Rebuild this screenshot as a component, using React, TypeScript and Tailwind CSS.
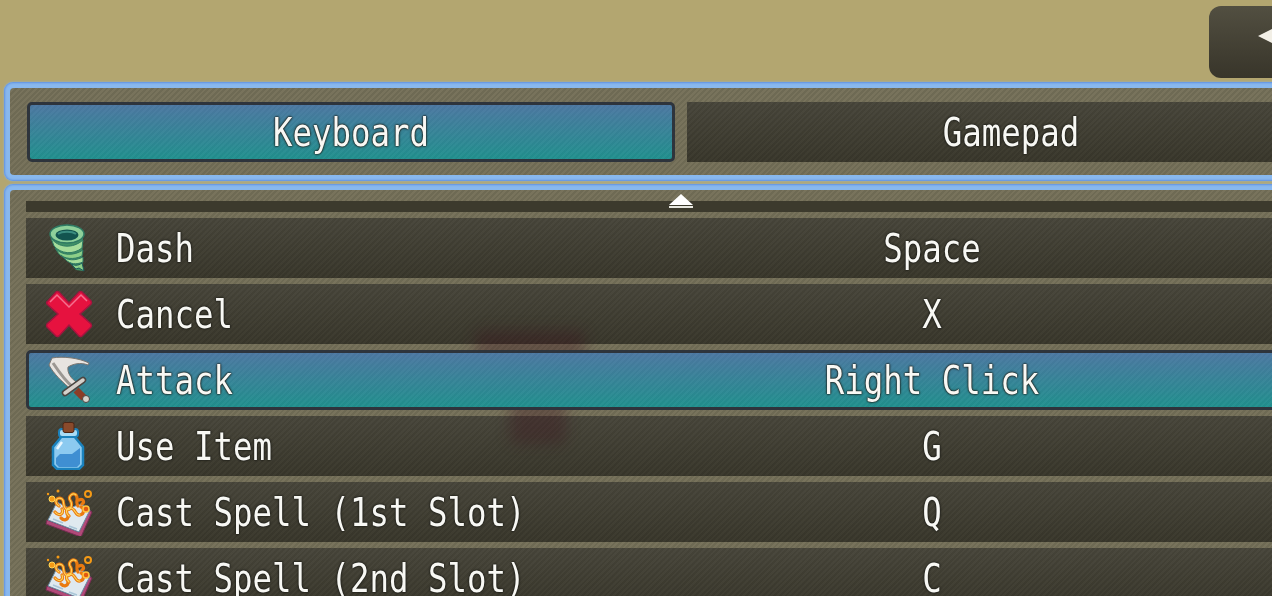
import React from "react";

const frameBg =
  "bg-[repeating-linear-gradient(135deg,#6e6a54_0px,#6e6a54_2px,#78735c_2px,#78735c_4px)]";
const darkBg =
  "bg-[repeating-linear-gradient(135deg,rgba(255,255,255,0.02)_0px,rgba(255,255,255,0.02)_2px,rgba(0,0,0,0.03)_2px,rgba(0,0,0,0.03)_4px),linear-gradient(to_bottom,#47453a,#38362a)]";
const activeBg =
  "bg-[repeating-linear-gradient(135deg,rgba(255,255,255,0.025)_0px,rgba(255,255,255,0.025)_2px,rgba(0,0,0,0.02)_2px,rgba(0,0,0,0.02)_4px),linear-gradient(to_bottom,#4c78a2,#21908e)]";
const panelEdge =
  "rounded-[9px] bg-[#88b8ee] p-[6px] shadow-[inset_0_0_2px_1px_#6092e0,0_0_2px_#8fb8e0]";

function Label({ children }: { children: React.ReactNode }) {
  return (
    <span className="relative top-px inline-block scale-y-[1.22] whitespace-pre font-['DejaVu_Sans_Mono',monospace] text-[32.4px] leading-none text-[#f8f8f4] [text-shadow:0_0_2px_#1d1d18,0_0_2px_#1d1d18,0_0_1px_#1d1d18]">
      {children}
    </span>
  );
}

function Tornado() {
  return (
    <svg viewBox="0 0 48 48" className="h-12 w-12 shrink-0">
      <path d="M6 12 C8 22 14 32 24 38 L31 46 L38 47 L37 34 L38 12 Z" fill="#3f8f66" />
      <path d="M6 14 C13 24 28 25 38 16 L37 24 C28 31 16 30 9 22 Z" fill="#a5dc9a" stroke="#2f7a63" strokeWidth="1" />
      <path d="M10 24 C17 32 29 32 38 26 L37 32 C29 36 19 35 14 30 Z" fill="#8ccf88" stroke="#2f7a63" strokeWidth="1" />
      <path d="M16 31 C22 37 30 37 38 33 L38 38 C31 41 25 40 21 36 Z" fill="#a5dc9a" stroke="#2f7a63" strokeWidth="1" />
      <path d="M25 39 C29 42 33 42 37 39 L39 47 L34 44 L31 45 Z" fill="#8ccf88" stroke="#1e5d5c" strokeWidth="1" />
      <ellipse cx="22" cy="10" rx="17" ry="9" fill="#8ed09a" stroke="#2f7a63" strokeWidth="1.5" />
      <ellipse cx="22" cy="11" rx="11.5" ry="5.5" fill="#12544f" />
      <path d="M13 10 C17 7 27 7 31 10" fill="none" stroke="#3a8c80" strokeWidth="2" />
    </svg>
  );
}

function Cross() {
  return (
    <svg viewBox="0 0 48 48" className="h-12 w-12 shrink-0">
      <path
        d="M3 11 L11 2 Q12 1 14 2 L24 13 L34 2 Q36 1 37 2 L46 11 Q47 12 46 14 L35 24 L46 34 Q47 36 46 37 L37 46 Q36 47 34 46 L24 35 L14 46 Q12 47 11 46 L2 37 Q1 36 2 34 L13 24 L2 14 Q1 12 3 11 Z"
        fill="#e6123f"
        stroke="#a8123f"
        strokeWidth="1.5"
      />
      <path d="M5 12 L12 5 L24 17 L36 5 L42 11" fill="none" stroke="#f4708f" strokeWidth="1.5" />
    </svg>
  );
}

function Sword() {
  return (
    <svg viewBox="0 0 48 48" className="h-12 w-12 shrink-0">
      <path
        d="M7 2 C18 0 34 2 44 7 L43 9 C35 6 28 8 23 11 C22 17 26 23 33 27 L27 34 C18 27 8 17 4 9 Z"
        fill="#e8e4e0"
        stroke="#7c7670"
        strokeWidth="1"
      />
      <path d="M8 7 C12 13 20 25 28 31" fill="none" stroke="#9b9792" strokeWidth="3" />
      <path d="M20 37 L38 24" stroke="#4b4642" strokeWidth="6.5" strokeLinecap="round" />
      <path d="M20 37 L38 24" stroke="#d6d1cb" strokeWidth="3.5" strokeLinecap="round" />
      <path d="M31 34 L39 42" stroke="#8c3d26" strokeWidth="7" />
      <circle cx="41" cy="43" r="3.5" fill="#d8d4cc" stroke="#4b4642" strokeWidth="1" />
    </svg>
  );
}

function Potion() {
  return (
    <svg viewBox="0 0 48 48" className="h-12 w-12 shrink-0">
      <path d="M17 14 L8 25 L8 43 L12 47 L34 47 L38 43 L38 25 L29 14 Z" fill="#8ccaf0" stroke="#1b82bd" strokeWidth="2.5" />
      <path d="M15 32 L27 32 L35 26 L35 42 L32 45 L14 45 L11 42 L11 36 Z" fill="#3f8fd2" />
      <path d="M12 27 L17 20" stroke="#eaf7ff" strokeWidth="2.5" />
      <rect x="14" y="7" width="19" height="8" rx="3" fill="#a9dcf6" stroke="#1b82bd" strokeWidth="2" />
      <rect x="18" y="0.5" width="11" height="10" rx="2" fill="#8a4a2b" stroke="#4d2616" strokeWidth="1" />
    </svg>
  );
}

function SpellBook() {
  return (
    <svg viewBox="0 0 48 48" className="h-12 w-12 shrink-0">
      <path d="M1 36 L36 49 L47 24 L44 22 L34 44 L2 32 Z" fill="#b14a78" stroke="#7a2c55" strokeWidth="1" />
      <path d="M3 32 L12 14 L24 20 L36 16 L45 22 L34 44 Z" fill="#dfe9ef" stroke="#6a8aa0" strokeWidth="1" />
      <path d="M8 31 L18 35 M24 38 L32 41" stroke="#a9c6d8" strokeWidth="1.5" />
      <g fill="none" stroke="#ea7a10" strokeWidth="3.2" strokeLinecap="round">
        <path d="M14 18 C8 14 12 8 17 11 C20 13 17 18 21 21 C26 24 28 16 25 12 C23 8 28 4 31 7 C34 11 30 14 33 18" />
        <path d="M24 28 C20 25 21 19 26 20 C31 21 30 28 35 27 C40 26 39 20 36 19" />
        <path d="M10 24 C14 29 19 26 17 21" />
        <path d="M34 12 C38 10 40 14 37 16" />
        <path d="M16 30 C19 33 23 32 23 28" />
      </g>
      <g fill="none" stroke="#ffd65a" strokeWidth="1.2" strokeLinecap="round">
        <path d="M14 18 C8 14 12 8 17 11 C20 13 17 18 21 21 C26 24 28 16 25 12 C23 8 28 4 31 7" />
        <path d="M24 28 C20 25 21 19 26 20 C31 21 30 28 35 27" />
        <path d="M10 24 C14 29 19 26 17 21" />
      </g>
      <circle cx="43" cy="6" r="3" fill="none" stroke="#f59a16" strokeWidth="2" />
      <circle cx="41" cy="21" r="3" fill="#e2590f" stroke="#ffc23d" strokeWidth="1.5" />
      <circle cx="7" cy="11" r="3" fill="#f59a16" stroke="#ffd65a" strokeWidth="1" />
      <circle cx="13" cy="3" r="1.5" fill="#f59a16" />
      <circle cx="3" cy="6" r="1.2" fill="#f59a16" />
    </svg>
  );
}

const rows = [
  { icon: <Tornado />, name: "Dash", key_: "Space" },
  { icon: <Cross />, name: "Cancel", key_: "X" },
  { icon: <Sword />, name: "Attack", key_: "Right Click", active: true },
  { icon: <Potion />, name: "Use Item", key_: "G" },
  { icon: <SpellBook />, name: "Cast Spell (1st Slot)", key_: "Q" },
  { icon: <SpellBook />, name: "Cast Spell (2nd Slot)", key_: "C" },
];

export default function App() {
  return (
    <div className="flex h-[596px] w-[1272px] flex-col overflow-hidden bg-[#b3a670]">
      <div className="flex h-[82px] shrink-0 justify-start pl-[1209px] pt-[6px]">
        <div className="flex h-[72px] w-[110px] shrink-0 items-start rounded-xl bg-gradient-to-b from-[#524f41] to-[#38352a] pl-[49px] pt-[22px]">
          <div className="h-0 w-0 border-y-[8px] border-r-[16px] border-y-transparent border-r-[#f2efe6]" />
        </div>
      </div>

      <div className={`ml-1 h-[99px] w-[1340px] shrink-0 ${panelEdge}`}>
        <div className={`flex h-[87px] gap-3 rounded-[4px] px-[17px] pt-[14px] ${frameBg}`}>
          <div className={`flex h-[60px] w-[648px] shrink-0 items-center justify-center rounded-[5px] border-[3px] border-[#2e343c] ${activeBg}`}>
            <Label>Keyboard</Label>
          </div>
          <div className={`flex h-[60px] w-[648px] shrink-0 items-center justify-center ${darkBg}`}>
            <Label>Gamepad</Label>
          </div>
        </div>
      </div>

      <div className={`relative ml-1 mt-[3px] h-[500px] w-[1340px] shrink-0 ${panelEdge}`}>
        <div className={`flex h-full flex-col gap-[6px] overflow-hidden rounded-[4px] px-4 pt-[11px] ${frameBg}`}>
          <div className="h-[11px] w-full shrink-0 bg-[#3c3a2d]" />
          {rows.map((row) => (
            <div
              key={row.name}
              className={`flex h-[60px] w-[1308px] shrink-0 items-center ${
                row.active ? `relative z-10 rounded-[5px] border-[3px] border-[#2e343c] ${activeBg}` : darkBg
              }`}
            >
              <div className={`flex flex-1 items-center gap-[23px] ${row.active ? "pl-4" : "pl-[19px]"}`}>
                {row.icon}
                <Label>{row.name}</Label>
              </div>
              <div className={`text-center ${row.active ? "w-[798px]" : "w-[804px]"}`}>
                <Label>{row.key_}</Label>
              </div>
            </div>
          ))}
        </div>

        {/* scroll arrow */}
        <div className="absolute left-[665px] top-[10px] flex flex-col items-center gap-px">
          <div className="h-0 w-0 border-x-[12px] border-b-[11px] border-x-transparent border-b-white" />
          <div className="h-[2px] w-6 bg-[#e8e8e0]" />
        </div>

        {/* faint shadow of the sprite behind the window */}
        <div className="pointer-events-none absolute left-[471px] top-[146px] h-[40px] w-[110px] rounded-lg bg-[#3a0c1c]/30 blur-[7px]" />
        <div className="pointer-events-none absolute left-[506px] top-[196px] h-[64px] w-[56px] rounded-lg bg-[#3a0c1c]/30 blur-[7px]" />
      </div>
    </div>
  );
}
